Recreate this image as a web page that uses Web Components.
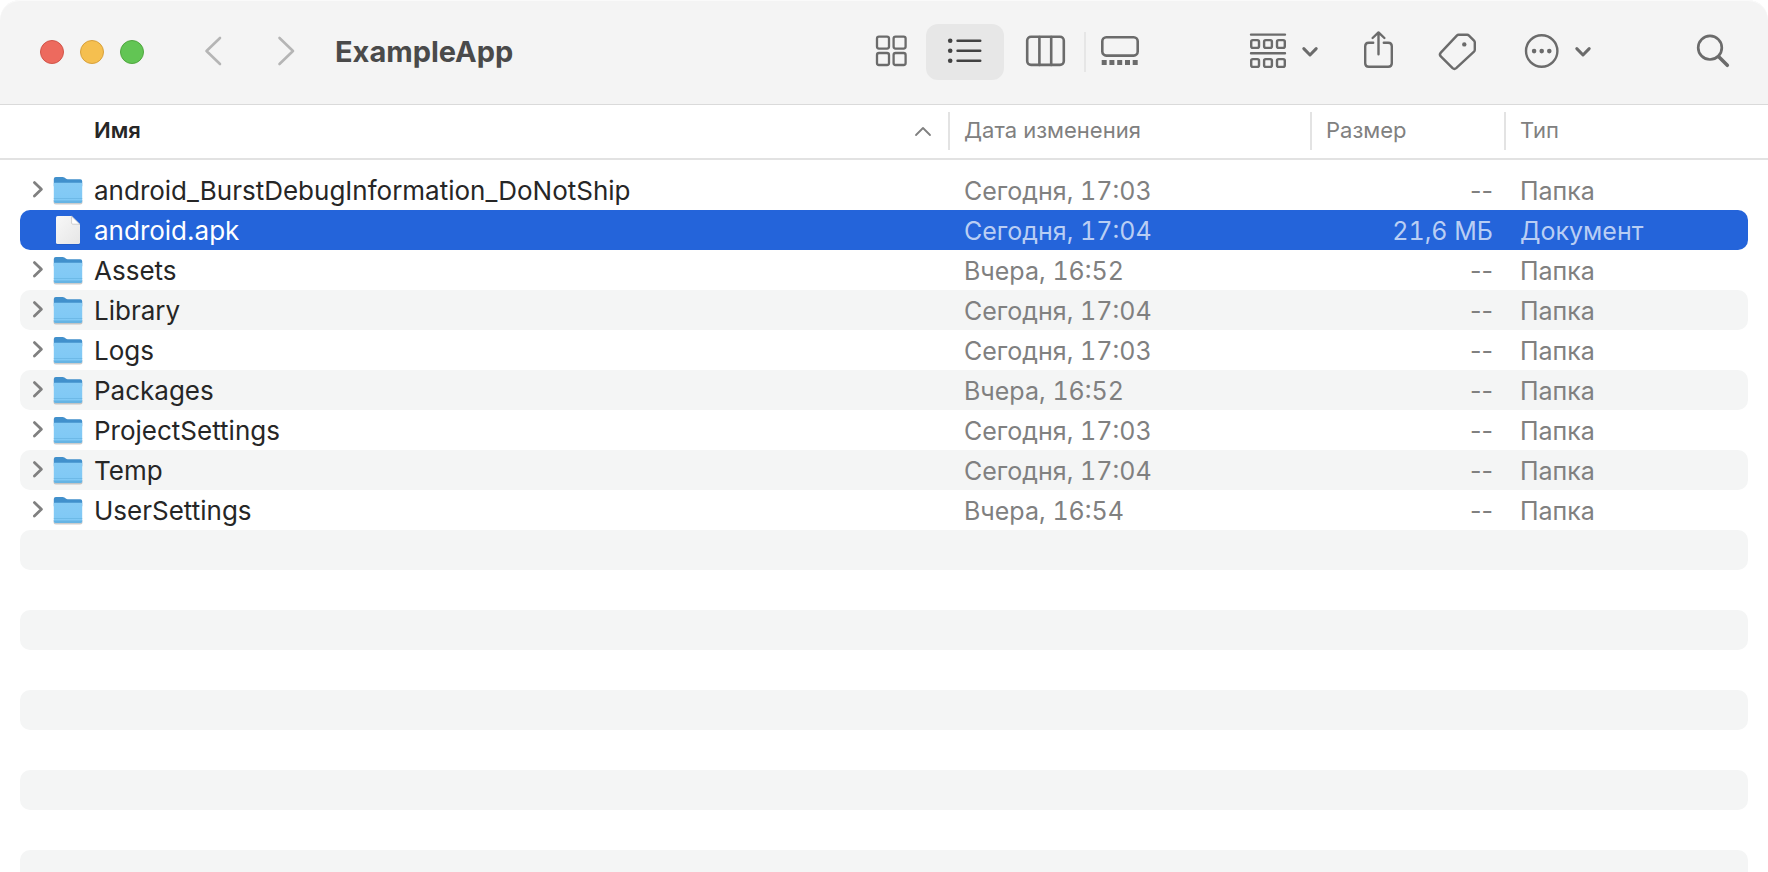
<!DOCTYPE html>
<html lang="ru">
<head>
<meta charset="utf-8">
<title>ExampleApp</title>
<style>
  html, body { margin: 0; height: 100%; background: #fff; }
  body { font-family: Inter, "Liberation Sans", sans-serif; overflow: hidden; }
</style>
</head>
<body>
<finder-window>
  <finder-toolbar slot="toolbar">ExampleApp</finder-toolbar>
  <file-list>
    <file-entry modified="Сегодня, 17:03" kind="Папка">android_BurstDebugInformation_DoNotShip</file-entry>
    <file-entry modified="Сегодня, 17:04" size="21,6 МБ" kind="Документ" selected>android.apk</file-entry>
    <file-entry modified="Вчера, 16:52" kind="Папка">Assets</file-entry>
    <file-entry modified="Сегодня, 17:04" kind="Папка">Library</file-entry>
    <file-entry modified="Сегодня, 17:03" kind="Папка">Logs</file-entry>
    <file-entry modified="Вчера, 16:52" kind="Папка">Packages</file-entry>
    <file-entry modified="Сегодня, 17:03" kind="Папка">ProjectSettings</file-entry>
    <file-entry modified="Сегодня, 17:04" kind="Папка">Temp</file-entry>
    <file-entry modified="Вчера, 16:54" kind="Папка">UserSettings</file-entry>
  </file-list>
</finder-window>

<script>
const stroke = 'fill="none" stroke="currentColor" stroke-linecap="round" stroke-linejoin="round"';

const ICONS = {
  back: [40, 40, `<path ${stroke} stroke-width="2.6" d="M27 6 13.5 19 27 32"/>`],
  forward: [40, 40, `<path ${stroke} stroke-width="2.6" d="M13.5 6 27 19 13.5 32"/>`],
  grid: [40, 40, `<g ${stroke} stroke-width="2.3"><rect x="6" y="4.6" width="12" height="12" rx="2"/><rect x="22.6" y="4.6" width="12" height="12" rx="2"/><rect x="6" y="21" width="12" height="12" rx="2"/><rect x="22.6" y="21" width="12" height="12" rx="2"/></g>`],
  list: [40, 40, `<g fill="currentColor"><circle cx="5.2" cy="8.8" r="2.3"/><circle cx="5.2" cy="18.8" r="2.3"/><circle cx="5.2" cy="28.8" r="2.3"/></g><path ${stroke} stroke-width="2.6" d="M12.6 8.8h22.6M12.6 18.8h22.6M12.6 28.8h22.6"/>`],
  columns: [44, 40, `<g ${stroke} stroke-width="2.6"><rect x="5.2" y="4.7" width="36.6" height="28.2" rx="3.8"/><path d="M17.4 5v28M29.2 5v28"/></g>`],
  gallery: [40, 40, `<rect ${stroke} stroke-width="2.6" x="2.3" y="5.2" width="35.4" height="18.4" rx="4"/><path fill="currentColor" d="M1.7 28h5v5h-5zM9.4 28h5v5h-5zM17.2 28h5v5h-5zM25 28h5v5h-5zM32.7 28h5v5h-5z"/>`],
  group: [40, 40, `<g ${stroke} stroke-width="2.4"><path d="M2 2.6h34M2 21.2h34"/><rect x="2.2" y="8.1" width="7.8" height="7.8" rx="1.6"/><rect x="15.1" y="8.1" width="7.8" height="7.8" rx="1.6"/><rect x="28" y="8.1" width="7.8" height="7.8" rx="1.6"/><rect x="2.2" y="27.1" width="7.8" height="7.8" rx="1.6"/><rect x="15.1" y="27.1" width="7.8" height="7.8" rx="1.6"/><rect x="28" y="27.1" width="7.8" height="7.8" rx="1.6"/></g>`],
  down: [20, 20, `<path ${stroke} stroke-width="3" d="M3.8 6.6 10 13 16.2 6.6"/>`],
  share: [40, 40, `<path ${stroke} stroke-width="2.4" d="M15.2 10.7h-4.4q-3.6 0-3.6 3.6v16.9q0 3.6 3.6 3.6h19.4q3.6 0 3.6-3.6V14.3q0-3.6-3.6-3.6h-4.4M20.5 22.2V.8M14.6 6 20.5.4 26.4 6"/>`],
  tag: [48, 40, `<path ${stroke} stroke-width="2.4" d="M22.6 2.8h8.6q1 0 1.8.8l5 5q.8.8.8 1.8v7.4q0 1-.8 1.8L20.2 36.2q-1.8 1.6-3.6 0L4.8 24.4q-1.8-1.8 0-3.8L20.8 3.6q.8-.8 1.8-.8z"/><circle fill="currentColor" cx="28.3" cy="12.4" r="2.2"/>`],
  more: [40, 40, `<circle ${stroke} stroke-width="2.4" cx="19.7" cy="19" r="15.7"/><g fill="currentColor"><circle cx="12.1" cy="19.1" r="2.3"/><circle cx="19.7" cy="19.1" r="2.3"/><circle cx="27.3" cy="19.1" r="2.3"/></g>`],
  search: [40, 40, `<circle ${stroke} stroke-width="2.7" cx="18" cy="15.7" r="11.8"/><path ${stroke} stroke-width="3.6" d="M27 25 35.3 33.3"/>`],
  expand: [20, 20, `<path ${stroke} stroke-width="2.8" d="M6.4 2.6 13.4 9.3 6.4 16"/>`],
  ascending: [20, 20, `<path ${stroke} stroke-width="1.8" d="M3 14 10 7 17 14"/>`],
  folder: [32, 40, `<defs><linearGradient id="f" x1="0" y1="0" x2="0" y2="1"><stop offset="0" stop-color="#86cbf5"/><stop offset="1" stop-color="#7ec8f5"/></linearGradient></defs>
    <rect x="1.5" y="29" width="29" height="5.6" rx="2.5" fill="#000" opacity=".2"/>
    <path fill="#4190cc" d="M1.8 9q0-2 2-2h6.8q1 0 1.8.6l1.4 1q.8.6 1.8.6H28.2q2 0 2 2v5H1.8z"/>
    <path fill="url(#f)" d="M1.8 13.600q0-.8.8-.8h26.800q.8 0 .8.8v17.400q0 2-2 2H3.800q-2 0-2-2z"/>
    <path fill="#66b4e4" d="M1.8 30.4h28.4v.6q0 2-2 2H3.8q-2 0-2-2z"/><path fill="#69b6e4" d="M1.8 28h28.4v.8H1.8z"/>`],
  document: [32, 40, `<defs><linearGradient id="d" x1="0" y1="0" x2="1" y2="1"><stop offset="0" stop-color="#f8f8f8"/><stop offset="1" stop-color="#e6e6e6"/></linearGradient></defs>
    <path fill="#123a8c" opacity=".4" d="M4 32h24v1q0 1.600-1.600 1.600H5.600Q4 34.600 4 33z"/>
    <path fill="url(#d)" d="M5.600 6H19.600L28 14.400v18q0 1.600-1.600 1.600H5.600Q4 34 4 32.400V7.600Q4 6 5.600 6z"/>
    <path fill="#fff" stroke="#c4c4c4" stroke-width=".8" d="M19.600 6.200V13q0 1.200 1.200 1.200H27.800z"/>`]
};

class UiIcon extends HTMLElement {
  connectedCallback() {
    if (this.shadowRoot) return;
    const [w, h, body] = ICONS[this.getAttribute('name')];
    this.attachShadow({ mode: 'open' }).innerHTML = `
      <style>:host { display: block; flex: none; } svg { display: block; overflow: visible; }</style>
      <svg width="${w}" height="${h}" viewBox="0 0 ${w} ${h}" aria-hidden="true">${body}</svg>`;
  }
}
customElements.define('ui-icon', UiIcon);

class ToolButton extends HTMLElement {
  connectedCallback() {
    if (this.shadowRoot) return;
    this.attachShadow({ mode: 'open' }).innerHTML = `
      <style>
        :host { display: block; flex: none; color: #6b6b6b; }
        :host([disabled]) { color: #b5b5b5; }
        button { display: flex; align-items: center; justify-content: center; gap: 11px; width: 100%; height: 56px;
          margin: 0; padding: 0; border: 0; border-radius: 12px; background: none; color: inherit; }
        :host([pressed]) button { background: #e7e7e7; color: #424242; }
      </style>
      <button type="button" aria-label="${this.getAttribute('label')}"${this.hasAttribute('disabled') ? ' disabled' : ''}>
        <ui-icon name="${this.getAttribute('icon')}"></ui-icon>${this.hasAttribute('menu') ? '<ui-icon name="down"></ui-icon>' : ''}
      </button>`;
  }
}
customElements.define('tool-button', ToolButton);

class WindowControls extends HTMLElement {
  constructor() {
    super();
    this.attachShadow({ mode: 'open' }).innerHTML = `
      <style>
        :host { display: flex; gap: 16px; }
        button { box-sizing: border-box; width: 24px; height: 24px; padding: 0; border: 1px solid; border-radius: 50%; }
        .close { background: #ed6a5e; border-color: #d15549; }
        .minimize { background: #f5bf4f; border-color: #d8a13c; }
        .zoom { background: #62c554; border-color: #50a73f; }
      </style>
      <button class="close" aria-label="Закрыть"></button>
      <button class="minimize" aria-label="Свернуть"></button>
      <button class="zoom" aria-label="Развернуть"></button>`;
  }
}
customElements.define('window-controls', WindowControls);

class FinderToolbar extends HTMLElement {
  constructor() {
    super();
    this.attachShadow({ mode: 'open' }).innerHTML = `
      <style>
        :host { display: flex; align-items: center; box-sizing: border-box; height: 105px; padding: 0 36px 0 40px;
          background: #f4f4f4; box-shadow: inset 0 1px #fafafa; border-bottom: 1px solid #dadada; border-radius: 20px 20px 0 0; }
        nav { display: flex; gap: 33px; margin: 0 29px 0 49px; }
        h1 { flex: 1; margin: 0; font-size: 29px; line-height: 36px; font-weight: 700; color: #4a4a4a; white-space: nowrap; }
        .views { display: flex; align-items: center; margin-right: 95px; }
        .views i { width: 2px; height: 40px; background: #e6e6e6; }
        .grid { width: 70px; } .list { width: 78px; } .columns { width: 80px; } .gallery { width: 68px; }
        .actions { display: flex; gap: 38px; margin-right: 99px; }
      </style>
      <window-controls></window-controls>
      <nav>
        <tool-button icon="back" label="Назад" disabled></tool-button>
        <tool-button icon="forward" label="Вперед" disabled></tool-button>
      </nav>
      <h1><slot></slot></h1>
      <div class="views">
        <tool-button class="grid" icon="grid" label="Значки"></tool-button>
        <tool-button class="list" icon="list" label="Список" pressed></tool-button>
        <tool-button class="columns" icon="columns" label="Колонки"></tool-button>
        <i></i>
        <tool-button class="gallery" icon="gallery" label="Галерея"></tool-button>
      </div>
      <div class="actions">
        <tool-button icon="group" label="Группировка" menu></tool-button>
        <tool-button icon="share" label="Поделиться"></tool-button>
        <tool-button icon="tag" label="Теги"></tool-button>
        <tool-button icon="more" label="Действия" menu></tool-button>
      </div>
      <tool-button icon="search" label="Поиск"></tool-button>`;
  }
}
customElements.define('finder-toolbar', FinderToolbar);

/* Data holder: its attributes and text become one table row in <file-list>. */
class FileEntry extends HTMLElement {
  get row() {
    const folder = this.getAttribute('kind') === 'Папка';
    const name = this.textContent.trim();
    const size = this.getAttribute('size');
    return `<tr${this.hasAttribute('selected') ? ' class="selected"' : ''}>
      <td class="name">${folder
        ? `<button type="button" aria-label="Раскрыть ${name}"><ui-icon name="expand"></ui-icon></button><ui-icon name="folder"></ui-icon>`
        : '<b></b><ui-icon name="document"></ui-icon>'}<span>${name}</span></td>
      <td class="number">${this.getAttribute('modified')}</td>
      <td class="size${size ? ' number' : ''}">${size || '--'}</td>
      <td>${this.getAttribute('kind')}</td></tr>`;
  }
}
customElements.define('file-entry', FileEntry);

class FileList extends HTMLElement {
  connectedCallback() {
    if (this.shadowRoot) return;
    const rows = [...this.querySelectorAll('file-entry')].map(e => e.row).join('');
    this.attachShadow({ mode: 'open' }).innerHTML = `
      <style>
        :host { display: flex; flex-direction: column; min-height: 0; height: 100%; }
        table, thead, tbody { display: block; }
        table { flex: none; }
        tr { display: grid; grid-template-columns: minmax(0, 1fr) 362px 194px 244px; }
        th, td { padding: 0; text-align: left; font-weight: 400; white-space: nowrap; }
        thead tr { padding: 7px 20px 8px; border-bottom: 2px solid #e2e2e2; }
        th { box-sizing: border-box; height: 38px; padding-left: 14px; border-left: 2px solid #e3e3e3;
          font-size: 22px; line-height: 36px; color: #808080; }
        th.name { display: flex; justify-content: space-between; padding: 0 15px 0 74px; border: 0;
          font-weight: 600; color: #262626; }
        th ui-icon { align-self: center; color: #808080; }
        tbody { padding: 10px 20px 0; }
        tbody tr { height: 40px; border-radius: 10px; }
        tbody tr:nth-child(even) { background: #f4f5f5; }
        td { padding-left: 16px; font-size: 25px; line-height: 42px; color: #808080; }
        td.number { font-variant-numeric: tabular-nums; }
        td.name { display: flex; height: 40px; padding-left: 8px; font-size: 26px; color: #262626; }
        td.name span { margin-left: 10px; }
        td.size { padding: 0 11px 0 0; text-align: right; }
        button { align-self: center; width: 20px; height: 20px; margin: 0 4px 0 0; padding: 0; border: 0; background: none; color: #808080; }
        b { width: 24px; }
        tbody tr.selected { background: #2464da; }
        .selected td { color: #b9cef4; }
        .selected td.name { color: #fff; }
        .stripes { flex: 1; min-height: 0; overflow: hidden; padding: 0 20px; }
        .stripes div { height: 40px; margin-bottom: 40px; border-radius: 10px; background: #f4f5f5; }
      </style>
      <table>
        <thead><tr>
          <th class="name" aria-sort="ascending">Имя<ui-icon name="ascending"></ui-icon></th>
          <th>Дата изменения</th><th>Размер</th><th>Тип</th>
        </tr></thead>
        <tbody>${rows}</tbody>
      </table>
      <div class="stripes" aria-hidden="true">${'<div></div>'.repeat(20)}</div>`;
  }
}
customElements.define('file-list', FileList);

class FinderWindow extends HTMLElement {
  constructor() {
    super();
    this.attachShadow({ mode: 'open' }).innerHTML = `
      <style>
        :host { display: flex; flex-direction: column; height: 100vh; background: #fff; }
        main { flex: 1; min-height: 0; }
      </style>
      <slot name="toolbar"></slot>
      <main><slot></slot></main>`;
  }
}
customElements.define('finder-window', FinderWindow);
</script>
</body>
</html>
